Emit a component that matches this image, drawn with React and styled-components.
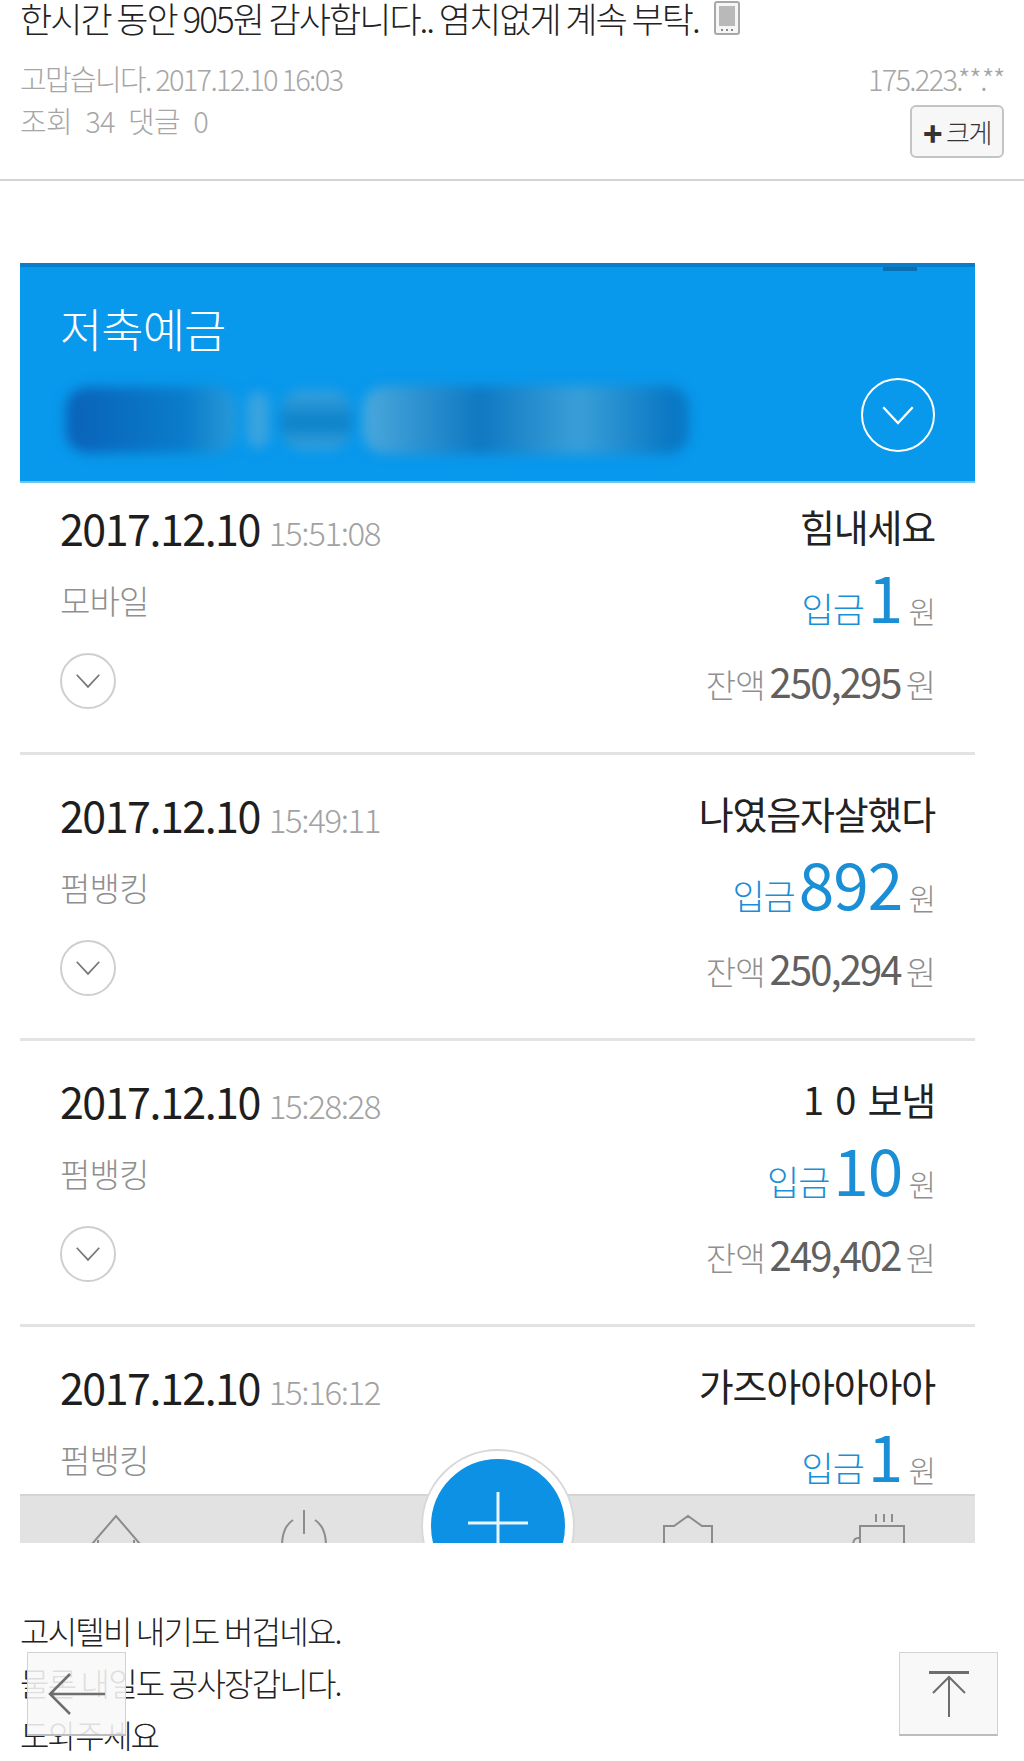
import React from "react";
import styled, { createGlobalStyle } from "styled-components";

const GlobalStyle = createGlobalStyle`
  html, body {
    margin: 0;
    padding: 0;
    background: #fff;
    overflow: hidden;
  }
  body {
    font-family: "Noto Sans CJK KR", "Noto Sans", sans-serif;
    font-weight: 300;
    color: #222;
  }
`;

const Page = styled.div`
  position: relative;
  width: 1024px;
  height: 1761px;
  overflow: hidden;
`;

const Header = styled.header`
  box-sizing: border-box;
  height: 181px;
  padding: 0 20px;
  border-bottom: 2px solid #d4d4d4;
`;

const Title = styled.h1`
  display: flex;
  align-items: center;
  gap: 15px;
  margin: 0;
  height: 36px;
  font-size: 35px;
  line-height: 36px;
  font-weight: 300;
  letter-spacing: -2px;
  color: #222;
  white-space: nowrap;
`;

const MetaRow = styled.div`
  display: flex;
  justify-content: space-between;
  align-items: flex-start;
  margin-top: ${(p) => p.$top}px;
  font-size: 29px;
  line-height: 40px;
  letter-spacing: -1.7px;
  color: #a6a6a6;
`;

const Stats = styled.span`
  display: flex;
  gap: 13px;
  padding-top: 13px;
  letter-spacing: -0.6px;
`;

const SizeButton = styled.button`
  display: flex;
  align-items: center;
  justify-content: center;
  gap: 5px;
  box-sizing: border-box;
  width: 94px;
  height: 53px;
  margin: 18px 0 0;
  padding: 0;
  font-family: inherit;
  font-size: 26px;
  font-weight: 300;
  letter-spacing: -1.5px;
  color: #333;
  background: #f7f7f7;
  border: 2px solid #c4c4c4;
  border-radius: 6px;
`;

const PlusMark = styled.b`
  font-size: 32px;
  font-weight: 900;
  line-height: 1;
  color: #333;
`;

const Shot = styled.section`
  position: relative;
  width: 955px;
  height: 1280px;
  margin: 82px 0 0 20px;
  overflow: hidden;
  background: #fff;
`;

const Banner = styled.div`
  position: relative;
  box-sizing: border-box;
  height: 220px;
  padding: 27px 40px 0;
  background: #0898ec;
  border-top: 4px solid #0a7dca;
  border-bottom: 2px solid #6cc4f2;
  overflow: hidden;
`;

const BannerNotch = styled.i`
  position: absolute;
  top: 0;
  right: 58px;
  width: 34px;
  height: 4px;
  background: #0a6fb3;
`;

const BannerTitle = styled.div`
  font-size: 46px;
  line-height: 66px;
  font-weight: 300;
  letter-spacing: -1px;
  color: #fff;
`;

const BannerBottom = styled.div`
  display: flex;
  align-items: center;
  justify-content: space-between;
  margin-top: 14px;
`;

const BlurGroup = styled.div`
  display: flex;
  align-items: center;
  gap: 11px;
  height: 72px;
  margin: 10px 0 0 6px;
  filter: blur(6px);
`;

const Blob = styled.i`
  display: block;
  width: ${(p) => p.$w}px;
  height: ${(p) => p.$h}px;
  border-radius: 22px;
  background: ${(p) => p.$bg};
`;

const Round = styled.span`
  display: flex;
  align-items: center;
  justify-content: center;
  box-sizing: border-box;
  flex: none;
  width: ${(p) => p.$size}px;
  height: ${(p) => p.$size}px;
  border: 2px solid ${(p) => p.$color};
  border-radius: 50%;
`;

const Row = styled.article`
  box-sizing: border-box;
  height: ${(p) => (p.$first ? 272 : 286)}px;
  padding: ${(p) => (p.$first ? 15 : 30)}px 40px 0;
  border-bottom: 3px solid #e3e3e3;
  display: grid;
  grid-template-columns: 1fr auto;
  grid-template-rows: 58px 88px 74px;
  align-items: center;
`;

const DateLine = styled.div`
  display: flex;
  align-items: baseline;
  gap: 9px;
  font-size: 43px;
  font-weight: 400;
  letter-spacing: -1.5px;
  color: #1e1e1e;
`;

const TimeText = styled.span`
  font-size: 33px;
  font-weight: 300;
  letter-spacing: -1.4px;
  color: #a2a2a2;
`;

const Memo = styled.div`
  justify-self: end;
  margin-top: -3px;
  font-size: 38px;
  font-weight: 400;
  letter-spacing: -1.2px;
  word-spacing: 5px;
  color: #222;
`;

const Source = styled.div`
  font-size: 33px;
  letter-spacing: -0.8px;
  color: #8f8f8f;
`;

const Amount = styled.div`
  justify-self: end;
  display: flex;
  align-items: baseline;
  gap: 4px;
  margin-bottom: 7px;
  font-size: 35px;
  letter-spacing: -1px;
  color: #1a8fd6;
`;

const AmountNumber = styled.span`
  font-size: 64px;
  line-height: 70px;
  font-weight: 400;
  letter-spacing: -1px;
`;

const Won = styled.span`
  margin-left: 2px;
  font-size: 30px;
  color: #8f8f8f;
`;

const Balance = styled.div`
  justify-self: end;
  display: flex;
  align-items: baseline;
  gap: 5px;
  font-size: 33px;
  letter-spacing: -1px;
  color: #8f8f8f;
`;

const BalanceNumber = styled.span`
  font-size: 40px;
  font-weight: 400;
  letter-spacing: -1.9px;
  color: #606060;
`;

const TabBar = styled.nav`
  position: absolute;
  left: 0;
  right: 0;
  bottom: 0;
  height: 49px;
  background: #e2e2e2;
  border-top: 2px solid #d4d4d4;
  box-sizing: border-box;
`;

const TabIcon = styled.svg`
  position: absolute;
  top: ${(p) => p.$top}px;
  left: ${(p) => p.$left}px;
  fill: none;
  stroke: #8c8c8c;
  stroke-width: 2;
`;

const PlusButton = styled.div`
  position: absolute;
  left: 403px;
  top: 1188px;
  display: flex;
  align-items: flex-start;
  justify-content: center;
  box-sizing: border-box;
  width: 150px;
  height: 150px;
  padding-top: 33px;
  background: #0c91e4;
  border: 8px solid #fff;
  border-radius: 50%;
  box-shadow: 0 0 0 2px #d8d8d8;
`;

const Body = styled.div`
  margin: 61px 0 0 20px;
  font-size: 32px;
  line-height: 52px;
  letter-spacing: -1.8px;
  color: #222;
`;

const FloatButton = styled.button`
  position: absolute;
  top: 1652px;
  left: ${(p) => p.$left}px;
  display: flex;
  align-items: center;
  justify-content: center;
  box-sizing: border-box;
  width: 99px;
  height: 84px;
  padding: 0;
  background: ${(p) => p.$bg};
  border: 1px solid #d2d2d2;
  border-bottom: 2px solid #bdbdbd;
`;

const rows = [
  { time: "15:51:08", memo: "힘내세요", source: "모바일", amount: "1", balance: "250,295", first: true },
  { time: "15:49:11", memo: "나였음자살했다", source: "펌뱅킹", amount: "892", balance: "250,294" },
  { time: "15:28:28", memo: "1 0 보냄", source: "펌뱅킹", amount: "10", balance: "249,402" },
  { time: "15:16:12", memo: "가즈아아아아아", source: "펌뱅킹", amount: "1", balance: "" },
];

function Chevron({ size, color }) {
  return (
    <svg width={size} height={size * 0.6} viewBox="0 0 30 18" fill="none" stroke={color} strokeWidth="2">
      <path d="M2 2 L15 16 L28 2" />
    </svg>
  );
}

function PhoneIcon() {
  return (
    <svg width="26" height="34" viewBox="0 0 26 34">
      <rect x="1" y="1" width="24" height="32" rx="2" fill="#f6f6f6" stroke="#a8a8a8" strokeWidth="2" />
      <rect x="5" y="5" width="16" height="20" fill="#b9b9b9" />
      <path d="M7 29 H9 M12 29 H14 M17 29 H19" stroke="#888" strokeWidth="2" />
    </svg>
  );
}

export default function App() {
  return (
    <Page>
      <GlobalStyle />
      <Header>
        <Title>
          한시간 동안 905원 감사합니다.. 염치없게 계속 부탁.
          <PhoneIcon />
        </Title>
        <MetaRow $top={22}>
          <span>고맙습니다. 2017.12.10 16:03</span>
          <span>175.223.**.**</span>
        </MetaRow>
        <MetaRow $top={-11}>
          <Stats>
            <span>조회</span>
            <span>34</span>
            <span>댓글</span>
            <span>0</span>
          </Stats>
          <SizeButton>
            <PlusMark>+</PlusMark>크게
          </SizeButton>
        </MetaRow>
      </Header>

      <Shot>
        <Banner>
          <BannerNotch />
          <BannerTitle>저축예금</BannerTitle>
          <BannerBottom>
            <BlurGroup>
              <Blob $w={170} $h={66} $bg="linear-gradient(90deg, #0a62b8, #0a7cca 70%, #2a9ad8)" />
              <Blob $w={22} $h={56} $bg="#3aa3de" />
              <Blob $w={72} $h={60} $bg="linear-gradient(180deg, #3aa3de, #0a80c8 55%, #3aa3de)" />
              <Blob $w={326} $h={68} $bg="linear-gradient(90deg, #4aa8dc, #0f78c2 36%, #3a9fd8 66%, #0a78c4 94%)" />
            </BlurGroup>
            <Round $size={74} $color="#fff">
              <Chevron size={34} color="#fff" />
            </Round>
          </BannerBottom>
        </Banner>

        {rows.map((r) => (
          <Row key={r.time} $first={r.first}>
            <DateLine>
              2017.12.10 <TimeText>{r.time}</TimeText>
            </DateLine>
            <Memo>{r.memo}</Memo>
            <Source>{r.source}</Source>
            <Amount>
              입금 <AmountNumber>{r.amount}</AmountNumber>
              <Won>원</Won>
            </Amount>
            <Round $size={56} $color="#cfcfcf">
              <Chevron size={26} color="#777" />
            </Round>
            {r.balance && (
              <Balance>
                잔액 <BalanceNumber>{r.balance}</BalanceNumber> 원
              </Balance>
            )}
          </Row>
        ))}

        <TabBar>
          <TabIcon $left={66} $top={18} width="60" height="50" viewBox="0 0 60 50">
            <path d="M6 30 L30 2 L54 30 M12 26 V50 M48 26 V50" />
          </TabIcon>
          <TabIcon $left={259} $top={14} width="50" height="50" viewBox="0 0 50 50">
            <path d="M14 10 C2 18 0 38 8 50 M36 10 C48 18 50 38 42 50 M25 0 V24" />
          </TabIcon>
          <TabIcon $left={642} $top={18} width="52" height="50" viewBox="0 0 52 50">
            <path d="M2 50 V12 H12 L26 2 L40 12 H50 V50" />
          </TabIcon>
          <TabIcon $left={830} $top={16} width="56" height="50" viewBox="0 0 56 50">
            <path d="M10 50 V14 H54 V50 M10 26 H8 Q3 26 3 34 V50 M26 2 V10 M34 2 V10 M42 2 V10" />
          </TabIcon>
        </TabBar>
        <PlusButton>
          <svg width="60" height="60" viewBox="0 0 60 60" stroke="#e8f5fd" strokeWidth="3">
            <path d="M0 31 H60 M30 0 V60" />
          </svg>
        </PlusButton>
      </Shot>

      <Body>
        고시텔비 내기도 버겁네요.
        <br />
        물론 내일도 공사장갑니다.
        <br />
        도와주세요
      </Body>

      <FloatButton $left={27} $bg="rgba(248,248,248,0.88)">
        <svg width="60" height="44" viewBox="0 0 60 44" fill="none" stroke="#6e6e6e" strokeWidth="2.5">
          <path d="M58 22 H3 M23 2 L3 22 L23 42" />
        </svg>
      </FloatButton>
      <FloatButton $left={899} $bg="#f8f8f8">
        <svg width="42" height="46" viewBox="0 0 42 46" fill="none" stroke="#6e6e6e" strokeWidth="2">
          <path d="M1 1.5 H41" strokeWidth="3" />
          <path d="M21 46 V6 M5 22 L21 6 L37 22" />
        </svg>
      </FloatButton>
    </Page>
  );
}
